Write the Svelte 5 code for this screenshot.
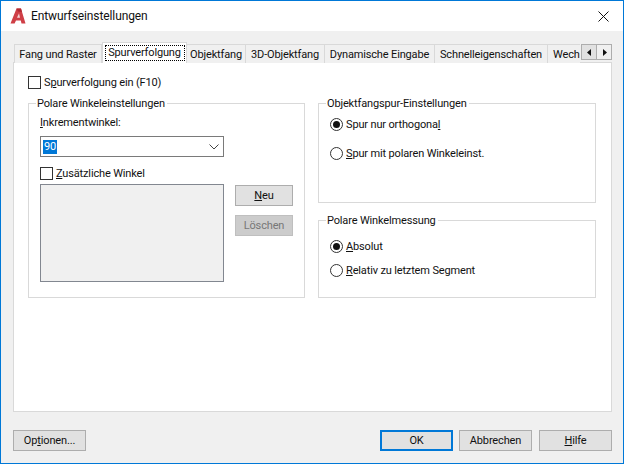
<script>
  const tabs = [
    { label: 'Fang und Raster', w: 88 },
    { label: 'Spurverfolgung', w: 85, active: true },
    { label: 'Objektfang', w: 59 },
    { label: '3D-Objektfang', w: 79 },
    { label: 'Dynamische Eingabe', w: 110 },
    { label: 'Schnelleigenschaften', w: 113 },
    { label: 'Wech', w: 32, last: true }
  ];
</script>

<div class="window">
  <header class="titlebar">
    <svg class="logo" width="16" height="16" viewBox="0 0 16 16">
      <path d="M0.5 15.5 L6.5 0.5 L11 0.5 L15.5 15.5 L11.5 15.5 L10.8 12.5 L6 12.5 L4.6 15.5 Z" fill="#cf3f46" />
      <path d="M7 9.8 L10 9.8 L9 5.2 Z" fill="#f6d5d6" />
      <path d="M6.5 0.5 L11 0.5 L12 4 L8 3.5 Z" fill="#b02a32" />
    </svg>
    <span class="title">Entwurfseinstellungen</span>
    <svg class="close" width="11" height="11" viewBox="0 0 11 11">
      <path d="M0.5 0.5 L10.5 10.5 M10.5 0.5 L0.5 10.5" stroke="#111" stroke-width="1" fill="none" />
    </svg>
  </header>

  <div class="body">
    <div class="tabstrip">
      {#each tabs as t}
        <div class="tab" class:active={t.active} class:last={t.last} style="width:{t.w}px">
          {#if t.active}<span class="focus">{t.label}</span>{:else}{t.label}{/if}
        </div>
      {/each}
      <div class="scroller">
        <div class="arrow"><svg width="5" height="7" viewBox="0 0 5 7"><path d="M4 0 V7 L0 3.5 Z" fill="#111" /></svg></div>
        <div class="arrow"><svg width="5" height="7" viewBox="0 0 5 7"><path d="M1 0 V7 L5 3.5 Z" fill="#111" /></svg></div>
      </div>
    </div>

    <main class="panel">
      <label class="check top"><span class="box"></span><span>S<u>p</u>urverfolgung ein (F10)</span></label>

      <div class="columns">
        <section class="group left">
          <span class="legend">Polare Winkeleinstellungen</span>
          <div class="field-label"><u>I</u>nkrementwinkel:</div>
          <div class="combo">
            <span class="sel">90</span>
            <svg width="10" height="6" viewBox="0 0 10 6"><path d="M0.5 0.5 L5 5 L9.5 0.5" stroke="#444" fill="none" /></svg>
          </div>
          <div class="lower">
            <div class="listcol">
              <label class="check"><span class="box"></span><span><u>Z</u>usätzliche Winkel</span></label>
              <div class="list"></div>
            </div>
            <div class="sidebtns">
              <button class="btn"><u>N</u>eu</button>
              <button class="btn off">Löschen</button>
            </div>
          </div>
        </section>

        <div class="rightcol">
          <section class="group g1">
            <span class="legend">Objektfangspur-Einstellungen</span>
            <div class="radio r1"><span class="dot on"></span><span>Spur nur orthogona<u>l</u></span></div>
            <div class="radio r2"><span class="dot"></span><span><u>S</u>pur mit polaren Winkeleinst.</span></div>
          </section>
          <section class="group g2">
            <span class="legend">Polare Winkelmessung</span>
            <div class="radio r3"><span class="dot on"></span><span><u>A</u>bsolut</span></div>
            <div class="radio r4"><span class="dot"></span><span><u>R</u>elativ zu letztem Segment</span></div>
          </section>
        </div>
      </div>
    </main>

    <footer class="footer">
      <button class="btn wide">Op<u>t</u>ionen...</button>
      <div class="spacer"></div>
      <button class="btn wide default">OK</button>
      <button class="btn wide">Abbrechen</button>
      <button class="btn wide"><u>H</u>ilfe</button>
    </footer>
  </div>
</div>

<style>
  :global(body) { margin: 0; }
  .window {
    box-sizing: border-box;
    width: 624px;
    height: 464px;
    border: 1px solid #0078d7;
    display: flex;
    flex-direction: column;
    font: 11px Roboto, "Liberation Sans", Arial, sans-serif;
    letter-spacing: -0.15px;
    color: #111;
    background: #f0f0f0;
    overflow: hidden;
  }
  u { text-underline-offset: 1px; }
  .titlebar {
    height: 30px;
    flex: none;
    background: #fff;
    display: flex;
    align-items: center;
    padding: 0 14px 0 9px;
  }
  .logo { margin-right: 5px; }
  .title { flex: 1; font-size: 12px; letter-spacing: -0.1px; }
  .body { flex: 1; display: flex; flex-direction: column; padding: 11px 11px 0 12px; min-height: 0; }
  .tabstrip { display: flex; height: 21px; position: relative; z-index: 1; padding-left: 1px; }
  .tab {
    box-sizing: border-box;
    height: 19px;
    margin-top: 2px;
    background: #f0f0f0;
    border: 1px solid #d9d9d9;
    border-bottom: none;
    border-left: none;
    display: flex;
    align-items: center;
    justify-content: center;
    white-space: nowrap;
    overflow: hidden;
    flex: none;
  }
  .tab:first-child { border-left: 1px solid #d9d9d9; }
  .tab.active {
    height: 21px;
    margin-top: 0;
    background: #fff;
    border-left: 1px solid #d9d9d9;
  }
  .focus {
    box-sizing: border-box;
    width: 80px;
    height: 16px;
    margin-top: -1px;
    outline: 1px dotted #000;
    outline-offset: -1px;
    line-height: 15px;
    text-align: center;
  }
  .tab.last { justify-content: flex-start; padding-left: 5px; border-right: none; }
  .scroller { position: absolute; left: 568px; top: 2px; display: flex; }
  .arrow {
    box-sizing: border-box;
    width: 16px;
    height: 16px;
    background: #e1e1e1;
    border: 1px solid #adadad;
    display: flex;
    align-items: center;
    justify-content: center;
  }
  .arrow + .arrow { background: #f0f0f0; margin-left: -1px; }
  .panel {
    box-sizing: border-box;
    width: 599px;
    height: 350px;
    flex: none;
    margin-top: -1px;
    background: #fff;
    border: 1px solid #d9d9d9;
    padding: 12px 14px 0 14px;
  }
  .check { display: flex; align-items: center; gap: 3px; height: 14px; }
  .box { box-sizing: border-box; width: 13px; height: 13px; border: 1px solid #333; background: #fff; flex: none; }
  .columns { display: flex; gap: 13px; margin-top: 14px; align-items: flex-start; }
  .group { box-sizing: border-box; border: 1px solid #d9d9d9; position: relative; }
  .legend { position: absolute; left: 7px; top: -7px; background: #fff; padding: 0 2px 0 1px; line-height: 14px; white-space: nowrap; }
  .left { width: 277px; height: 195px; padding: 12px 0 0 11px; }
  .field-label { line-height: 14px; }
  .combo {
    box-sizing: border-box;
    width: 184px;
    height: 21px;
    margin-top: 6px;
    border: 1px solid #7a7a7a;
    background: #fff;
    display: flex;
    align-items: center;
    justify-content: space-between;
    padding: 0 4px 0 2px;
  }
  .sel { background: #0078d7; color: #fff; line-height: 14px; padding: 0 1px; }
  .lower { display: flex; gap: 11px; margin-top: 9px; }
  .listcol { width: 184px; }
  .list { box-sizing: border-box; height: 98px; margin-top: 4px; background: #f0f0f0; border: 1px solid #828790; }
  .sidebtns { display: flex; flex-direction: column; gap: 9px; margin-top: 19px; }
  .btn {
    box-sizing: border-box;
    width: 58px;
    height: 21px;
    background: #e1e1e1;
    border: 1px solid #adadad;
    font: inherit;
    letter-spacing: inherit;
    color: #111;
    padding: 0;
  }
  .btn.off { background: #ccc; color: #777; border-color: #bfbfbf; }
  .btn.wide { width: 73px; }
  .btn.default { border: 2px solid #0078d7; }
  .rightcol { display: flex; flex-direction: column; gap: 17px; width: 278px; }
  .g1 { height: 100px; }
  .g2 { height: 78px; }
  .radio { display: flex; align-items: center; gap: 3px; position: absolute; left: 11px; height: 14px; white-space: nowrap; }
  .r1 { top: 13px; }
  .r2 { top: 42px; }
  .r3 { top: 18px; }
  .r4 { top: 42px; }
  .dot {
    box-sizing: border-box;
    width: 13px;
    height: 13px;
    border: 1px solid #333;
    border-radius: 50%;
    background: #fff;
    flex: none;
    position: relative;
  }
  .dot.on::after {
    content: '';
    position: absolute;
    left: 2px;
    top: 2px;
    width: 7px;
    height: 7px;
    border-radius: 50%;
    background: #111;
  }
  .footer { display: flex; gap: 6px; margin-top: 18px; width: 599px; }
  .footer .btn:nth-last-child(1) { margin-left: 1px; }
  .spacer { flex: 1; }
</style>
